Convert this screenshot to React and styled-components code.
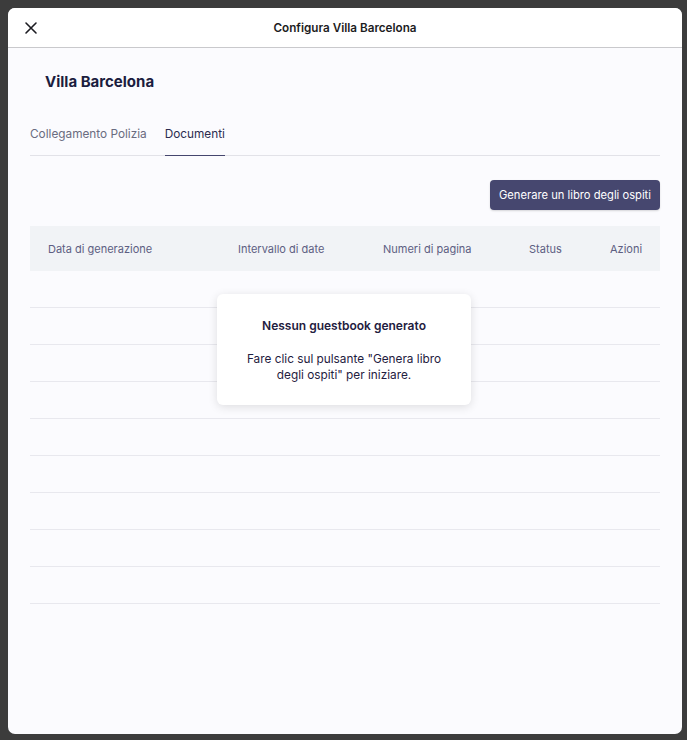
import React from 'react';
import styled, { createGlobalStyle } from 'styled-components';

const GlobalStyle = createGlobalStyle`
  html, body {
    margin: 0;
    padding: 0;
    background: #3c3c3c;
    font-family: Inter, "Noto Sans", sans-serif;
  }
`;

const Backdrop = styled.div`
  width: 687px;
  height: 740px;
  padding: 8px 5px 6px 8px;
  box-sizing: border-box;
  background: #3c3c3c;
`;

const Modal = styled.div`
  width: 674px;
  height: 726px;
  background: #fbfbfe;
  border-radius: 7px;
  overflow: hidden;
  display: flex;
  flex-direction: column;
`;

const Header = styled.header`
  height: 39px;
  flex-shrink: 0;
  background: #ffffff;
  border-bottom: 1px solid #c9c9cc;
  display: grid;
  grid-template-columns: 44px 1fr 44px;
  align-items: center;
`;

const CloseButton = styled.button`
  border: 0;
  background: none;
  padding: 0;
  margin-left: 16px;
  width: 14px;
  height: 14px;
  display: flex;
  cursor: pointer;
`;

const Title = styled.h1`
  margin: 0;
  font-size: 11.7px;
  font-weight: 600;
  color: #1c1c22;
  text-align: center;
`;

const Body = styled.div`
  padding: 24px 22px 0;
`;

const Heading = styled.h2`
  margin: 0 0 34px 15px;
  font-size: 15px;
  font-weight: 700;
  color: #1b1d3f;
  line-height: 20px;
`;

const Tabs = styled.div`
  display: flex;
  gap: 18px;
  border-bottom: 1px solid #e2e2e8;
`;

const Tab = styled.div`
  font-size: 11.8px;
  line-height: 16px;
  padding: 0 0 13px;
  color: ${p => (p.$active ? '#2b2c4f' : '#6a6b80')};
  border-bottom: 1px solid ${p => (p.$active ? '#45466e' : 'transparent')};
  margin-bottom: -1px;
`;

const Toolbar = styled.div`
  display: flex;
  justify-content: flex-end;
  padding: 24px 0 16px;
`;

const PrimaryButton = styled.button`
  height: 30px;
  padding: 0 9px;
  border: 0;
  border-radius: 4px;
  background: #46476f;
  color: #ffffff;
  font-family: Inter, sans-serif;
  font-size: 11.2px;
  box-shadow: 0 1px 2px rgba(0, 0, 0, 0.15);
`;

const Table = styled.div`
  position: relative;
`;

const HeadRow = styled.div`
  display: grid;
  grid-template-columns: 190px 145px 146px 81px auto;
  align-items: center;
  height: 45px;
  padding: 0 18px;
  background: #f1f3f6;
`;

const HeadCell = styled.div`
  font-size: 11px;
  color: #5d5e82;
  white-space: nowrap;
`;

const Row = styled.div`
  height: 36px;
  border-bottom: 1px solid #e8e8ee;
`;

const EmptyCard = styled.div`
  position: absolute;
  top: 68px;
  left: 187px;
  width: 254px;
  height: 111px;
  box-sizing: border-box;
  background: #ffffff;
  border-radius: 6px;
  box-shadow: 0 2px 10px rgba(0, 0, 0, 0.12);
  text-align: center;
  padding-top: 24px;
  color: #1f2040;
`;

const EmptyTitle = styled.div`
  font-size: 12px;
  font-weight: 600;
  line-height: 16px;
  margin-bottom: 17px;
`;

const EmptyText = styled.div`
  font-size: 11.8px;
  line-height: 16px;
  padding: 0 28px;
`;

const columns = ['Data di generazione', 'Intervallo di date', 'Numeri di pagina', 'Status', 'Azioni'];

export default function App() {
  return (
    <>
      <GlobalStyle />
      <Backdrop>
        <Modal>
          <Header>
            <CloseButton aria-label="Chiudi">
              <svg width="14" height="14" viewBox="0 0 14 14" fill="none" stroke="#1c1c22" strokeWidth="1.6" strokeLinecap="round">
                <path d="M2 2 L12 12 M12 2 L2 12" />
              </svg>
            </CloseButton>
            <Title>Configura Villa Barcelona</Title>
            <span />
          </Header>
          <Body>
            <Heading>Villa Barcelona</Heading>
            <Tabs>
              <Tab>Collegamento Polizia</Tab>
              <Tab $active>Documenti</Tab>
            </Tabs>
            <Toolbar>
              <PrimaryButton>Generare un libro degli ospiti</PrimaryButton>
            </Toolbar>
            <Table>
              <HeadRow>
                {columns.map(c => (
                  <HeadCell key={c}>{c}</HeadCell>
                ))}
              </HeadRow>
              {Array.from({ length: 9 }).map((_, i) => (
                <Row key={i} />
              ))}
              <EmptyCard>
                <EmptyTitle>Nessun guestbook generato</EmptyTitle>
                <EmptyText>Fare clic sul pulsante "Genera libro degli ospiti" per iniziare.</EmptyText>
              </EmptyCard>
            </Table>
          </Body>
        </Modal>
      </Backdrop>
    </>
  );
}
